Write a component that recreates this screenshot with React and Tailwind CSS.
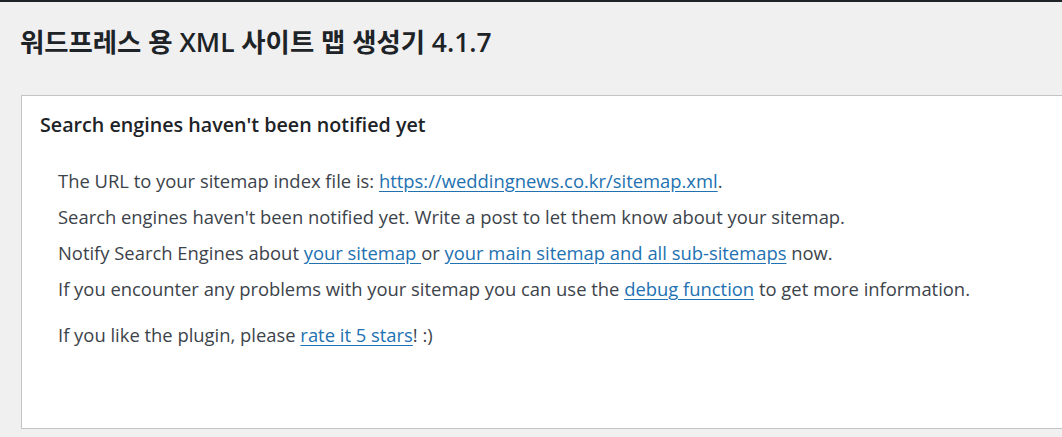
import React from 'react';

const linkCls = 'text-[#2271b1] underline underline-offset-[3px]';

const App = () => {
  return (
    <div
      className="min-h-[437px] bg-[#f0f0f1] border-t-2 border-[#1d2327] overflow-hidden"
      style={{ fontFamily: '"Open Sans", "Noto Sans CJK KR", sans-serif' }}
    >
      <div className="pl-[20px] pt-[24px]">
        <h1 className="text-[26.4px] font-semibold text-[#1d2327] leading-[32px]">
          워드프레스 용 XML 사이트 맵 생성기 4.1.7
        </h1>

        {/* Status box */}
        <div className="mt-[37px] ml-[1px] w-[1100px] h-[334px] bg-white border border-[#c3c4c7]">
          <h2 className="px-[18px] pt-[16px] text-[19.7px] font-semibold text-[#1d2327] leading-[26px]">
            Search engines haven't been notified yet
          </h2>
          <ul className="pl-[36px] pt-[30px] text-[18.4px] text-[#3c434a] leading-[26px] flex flex-col gap-[10px]">
            <li>
              The URL to your sitemap index file is:{' '}
              <a className={linkCls}>https://weddingnews.co.kr/sitemap.xml</a>.
            </li>
            <li>Search engines haven't been notified yet. Write a post to let them know about your sitemap.</li>
            <li>
              Notify Search Engines about <a className={linkCls}>your sitemap </a>or{' '}
              <a className={linkCls}>your main sitemap and all sub-sitemaps</a> now.
            </li>
            <li>
              If you encounter any problems with your sitemap you can use the{' '}
              <a className={linkCls}>debug function</a> to get more information.
            </li>
          </ul>
          <p className="pl-[36px] pt-[20px] text-[18.4px] text-[#3c434a] leading-[26px]">
            If you like the plugin, please <a className={linkCls}>rate it 5 stars</a>! :)
          </p>
        </div>
      </div>
    </div>
  );
};

export default App;
